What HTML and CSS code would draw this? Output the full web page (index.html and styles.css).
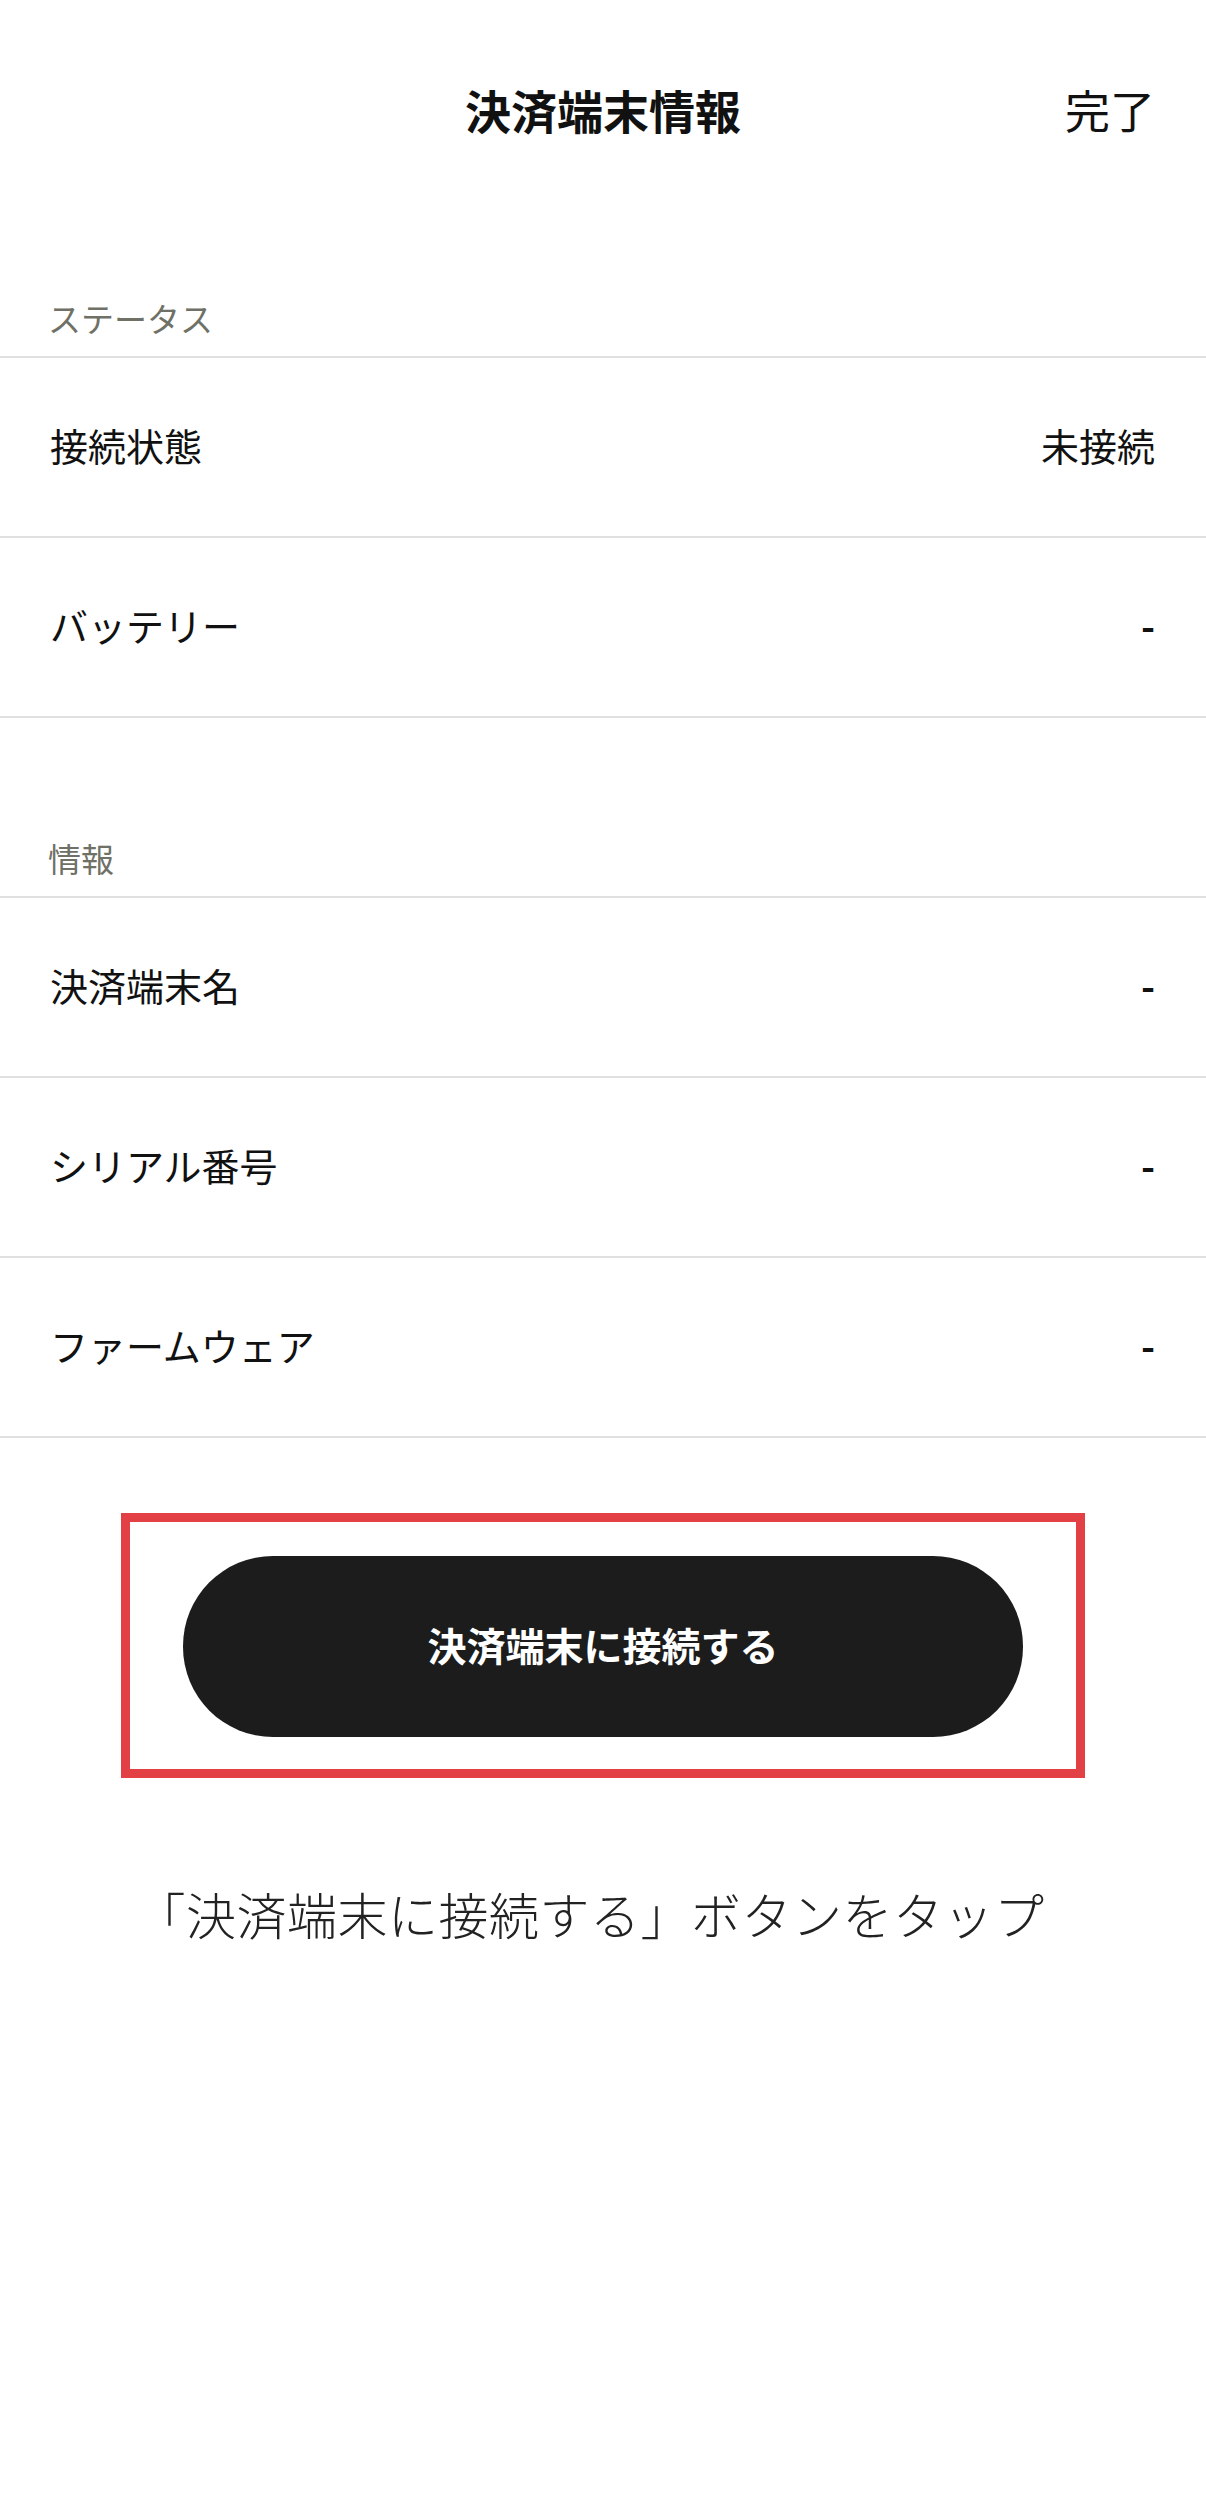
FILE: index.html
```html
<!DOCTYPE html>
<html lang="ja">
<head>
  <meta charset="UTF-8" />
  <meta name="viewport" content="width=device-width, initial-scale=1.0"/>
  <title>決済端末情報</title>
  <link rel="stylesheet" href="styles.css">
</head>

<body>
  <div class="header">
    <p class="header-titulo">決済端末情報</p>
    <span class="header-listo">完了</span>
  </div>

  <div class="seccion">ステータス</div>
  <ul class="lista">
    <li class="fila"><span>接続状態</span><span>未接続</span></li>
    <li class="fila"><span>バッテリー</span><span class="guion">-</span></li>
  </ul>

  <div class="seccion seccion-alta">情報</div>
  <ul class="lista">
    <li class="fila"><span>決済端末名</span><span class="guion">-</span></li>
    <li class="fila"><span>シリアル番号</span><span class="guion">-</span></li>
    <li class="fila"><span>ファームウェア</span><span class="guion">-</span></li>
  </ul>

  <!-- marco rojo de ayuda -->
  <div class="marco">
    <button type="button" class="boton-conectar">決済端末に接続する</button>
  </div>

  <p class="ayuda">「決済端末に接続する」ボタンをタップ</p>
</body>
</html>
```

FILE: styles.css
```css
body {
  margin: 0;
  font-family: "Noto Sans CJK JP", "Noto Sans", sans-serif;
  background: #fff;
  color: #111;
}

.header {
  height: 224px;
  box-sizing: border-box;
  padding-bottom: 6px;
  display: flex;
  align-items: center;
  justify-content: center;
  position: relative;
}

.header-titulo {
  margin: 0;
  font-size: 46px;
  font-weight: bold;
  color: #111;
}

.header-listo {
  position: absolute;
  right: 51px;
  top: 109px;
  transform: translateY(-50%);
  font-size: 45px;
  color: #111;
}

.seccion {
  height: 132px;
  box-sizing: border-box;
  display: flex;
  align-items: flex-end;
  padding: 0 48px 14px;
  font-size: 33px;
  line-height: 48px;
  color: #6f7066;
}

.seccion-alta {
  height: 178px;
}

.lista {
  list-style: none;
  margin: 0;
  padding: 0;
  border-top: 2px solid #e0e0e0;
}

.fila {
  height: 180px;
  box-sizing: border-box;
  display: flex;
  align-items: center;
  justify-content: space-between;
  padding: 0 51px 5px 50px;
  font-size: 38px;
  border-bottom: 2px solid #e0e0e0;
}

.guion {
  font-weight: bold;
}

.marco {
  width: 964px;
  box-sizing: border-box;
  margin: 75px auto 0;
  border: 9px solid #e34045;
  padding: 34px 53px 32px;
}

.boton-conectar {
  display: block;
  width: 100%;
  height: 181px;
  padding-bottom: 6px;
  border: none;
  border-radius: 90px;
  background: #1c1c1c;
  color: #fff;
  font-family: inherit;
  font-size: 39px;
  font-weight: bold;
  cursor: pointer;
}

.ayuda {
  margin: 98px 0 0;
  padding-right: 26px;
  text-align: center;
  font-size: 50px;
  line-height: 74px;
  font-weight: 300;
  letter-spacing: 0.5px;
  color: #222;
}
```
